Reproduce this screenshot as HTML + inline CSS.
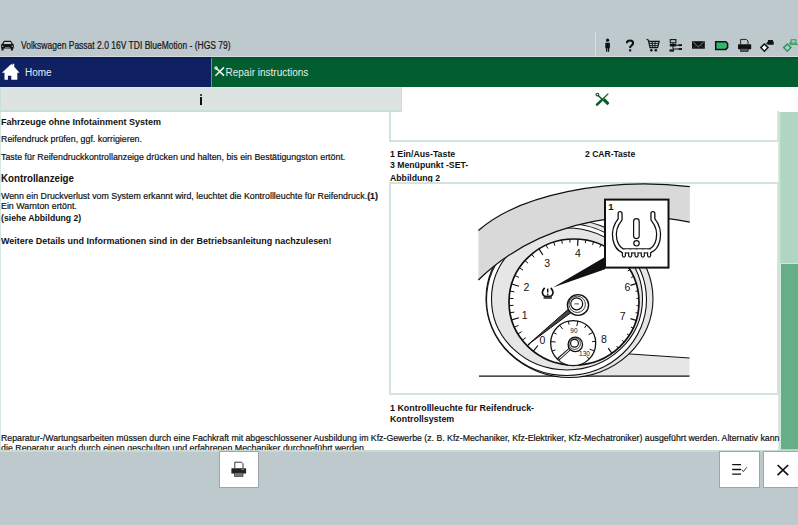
<!DOCTYPE html>
<html><head><meta charset="utf-8">
<style>
*{margin:0;padding:0;box-sizing:border-box}
html,body{width:798px;height:525px;overflow:hidden;background:#bec9cd;font-family:"Liberation Sans",sans-serif;color:#111}
.abs{position:absolute}
#title{left:21px;top:40px;font-size:10px;line-height:12px;color:#151515;white-space:nowrap;transform-origin:0 0;transform:scaleX(0.85);-webkit-text-stroke:0.2px #151515}
#home{left:0;top:57px;width:211px;height:30px;background:#0f2163;border-top:2px solid #0c1b5c}
#rep{left:211px;top:57px;width:587px;height:30px;background:#025d2f;border-left:1px solid #6f8f9a;border-top:2px solid #025529}
#tabs{left:0;top:87px;width:798px;height:26px;background:#fff}
#tab1{left:0;top:87px;width:402px;height:25px;background:#dde2e3;border:1px solid #c6e0d2;border-bottom:2px solid #c6e0d2;border-top:1px solid #d9ece2}
#content{left:0;top:112px;width:798px;height:338px;background:#fff;overflow:hidden;border-left:1px solid #d6e8de}
#sbtrack{left:778px;top:112px;width:20px;height:338px;background:linear-gradient(to right,#e2efe8 0,#c2dfd0 2px,#b1d5c3 3px,#b1d5c3 100%)}
#sbthumb{left:780px;top:263px;width:18px;height:186px;background:#66ae88;border-left:1px solid #d4ebdf;border-top:1px solid #cfe8db}
.t{position:absolute;white-space:nowrap;font-size:9px;line-height:10px;color:#111;transform-origin:0 0}
.b{font-weight:bold}
.r{font-size:9.5px;transform:scaleX(0.93);-webkit-text-stroke:0.2px #111}
#bottom{left:0;top:450px;width:798px;height:75px;background:#bec9cd;border-top:2px solid #c6dcd1}
.btn{position:absolute;background:#fff;border:1px solid #9ca6ab}
.nt{position:absolute;white-space:nowrap;color:#e4e8f2;font-size:10px;line-height:12px;transform-origin:0 0}
</style></head><body>
<div id="title" class="abs">Volkswagen Passat 2.0 16V TDI BlueMotion - (HGS 79)</div>
<!-- car icon -->
<svg class="abs" style="left:0;top:37px" width="16" height="16" viewBox="0 37 16 16">
<path d="M2.4 43.6 L3.4 41.4 Q3.7 40.8 4.4 40.8 L10.4 40.8 Q11.1 40.8 11.4 41.4 L12.5 43.6 L13.4 44 Q13.8 44.3 13.8 45 L13.8 48.4 L12.9 48.4 L12.9 50.4 L10.9 50.4 L10.9 48.6 L3.6 48.6 L3.6 50.4 L1.6 50.4 L1.6 48.4 L1.1 48.4 L1.1 45 Q1.1 44.3 1.5 44 Z" fill="#151515"/>
<path d="M3.6 43.9 L4.4 42.1 L10.6 42.1 L11.4 43.9 Z" fill="#c6cfd3"/>
<circle cx="2.7" cy="46.2" r="0.75" fill="#aab4b8"/><circle cx="12.2" cy="46.2" r="0.75" fill="#aab4b8"/>
<rect x="5.2" y="47.2" width="4.4" height="0.8" fill="#8a9499"/>
</svg>
<!-- header right icons -->
<div class="abs" style="left:595px;top:32px;width:1px;height:25px;background:#d9dfe2"></div>
<svg class="abs" style="left:596px;top:32px" width="202" height="25" viewBox="596 32 202 25">
<!-- person -->
<circle cx="607.6" cy="40.2" r="1.6" fill="#111"/>
<path d="M605.3 42.8 H609.9 V48.2 H609.2 V51.8 H607.9 V48.2 H607.3 V51.8 H606 V48.2 H605.3 Z" fill="#111"/>
<!-- question -->
<path d="M626.9 43.2 Q626.9 40.5 630 40.5 Q633.1 40.5 633.1 43.1 Q633.1 44.6 631.4 45.6 Q630.1 46.3 630.1 48" fill="none" stroke="#111" stroke-width="2.1"/>
<rect x="629" y="49.3" width="2.2" height="2.1" fill="#111"/>
<!-- cart -->
<path d="M646.6 39.3 L648.4 40.2 L650 47.7 H657.6 L659.2 41.4 H648.6" fill="none" stroke="#111" stroke-width="1.2"/>
<path d="M649.3 43.4 H658.6 M649.8 45.6 H658 M652 41.4 L652.6 47.7 M655.2 41.4 L654.9 47.7" stroke="#111" stroke-width="0.9"/>
<circle cx="651.3" cy="50.3" r="1.3" fill="#111"/><circle cx="655.8" cy="50.3" r="1.3" fill="#111"/>
<!-- network -->
<rect x="670.3" y="39.6" width="5.6" height="3.2" fill="none" stroke="#111" stroke-width="1.1"/>
<rect x="669.8" y="44" width="6.6" height="2.4" fill="#111"/>
<path d="M673 42.8 V49.2 M676.4 45.2 H682 M673 49 H682" stroke="#111" stroke-width="1"/>
<rect x="678.6" y="44.3" width="3.4" height="1.8" fill="#111"/><rect x="678.6" y="48.1" width="3.4" height="1.8" fill="#111"/>
<rect x="669.5" y="49.4" width="4.5" height="2.2" fill="#111"/>
<!-- mail -->
<rect x="692" y="41.2" width="12.8" height="7.5" fill="#111"/>
<path d="M693.2 42 L698.4 47 L703.6 42" fill="none" stroke="#9aa3a6" stroke-width="0.8"/><path d="M693.2 48 L696.2 45.4 M703.6 48 L700.6 45.4" fill="none" stroke="#555" stroke-width="0.6"/>
<!-- battery -->
<path d="M715.7 41.7 H725.8 L727.6 43.6 V47.6 L725.8 49.4 H715.7 Z" fill="#2db86a" stroke="#111" stroke-width="1.5" stroke-linejoin="miter"/>
<!-- printer -->
<path d="M740.6 44 V39.4 H746.3 L748 41 V44" fill="none" stroke="#111" stroke-width="0.9"/>
<rect x="738" y="44.2" width="13.2" height="5" rx="0.6" fill="#111"/>
<rect x="740.6" y="48.4" width="7.6" height="3" fill="#555" stroke="#111" stroke-width="0.6"/>
<!-- diamond/car -->
<path d="M764.4 44 L768 47.6 L764.4 51.2 L760.8 47.6 Z" fill="#fff" stroke="#111" stroke-width="1.5"/>
<path d="M766.4 44.2 L768.8 41.8" stroke="#111" stroke-width="1.2"/>
<path d="M767.5 42.4 L768.2 40 H772.8 L773.7 42.4 V44.8 H767.5 Z" fill="#111"/>
<!-- green diamond -->
<path d="M787.3 44 L790.9 47.6 L787.3 51.2 L783.7 47.6 Z" fill="none" stroke="#2a9a5a" stroke-width="1.5"/>
<path d="M789.2 44.1 L791.4 41.9" stroke="#2a9a5a" stroke-width="1.1"/>
<rect x="791" y="39.8" width="5" height="3.2" fill="none" stroke="#2a9a5a" stroke-width="1"/>
<path d="M790 44.3 H798" stroke="#2a9a5a" stroke-width="1.2"/>
</svg>

<div class="abs" style="left:0;top:56px;width:798px;height:1px;background:#d5dcdf"></div>
<div id="home" class="abs"></div>
<div id="rep" class="abs"></div>
<!-- home icon -->
<svg class="abs" style="left:0;top:57px" width="30" height="30" viewBox="0 57 30 30">
<path d="M1.9 72.7 L11.3 64 L12.6 65.2 V63.8 H14.2 V66.7 L19.5 72.7 H17.3 V79.8 H11.3 V75.7 H7.9 V79.8 H4.5 V72.7 Z" fill="#fff"/>
</svg>
<div class="nt" style="left:25px;top:67px;color:#e6e9f3">Home</div>
<!-- tools icon nav -->
<svg class="abs" style="left:212px;top:57px" width="16" height="30" viewBox="212 57 16 30">
<path d="M215.6 67.6 L224 75.6 M224 67.4 L215.4 75.8" stroke="#e8eee9" stroke-width="1.6"/>
<circle cx="216" cy="68" r="1.3" fill="none" stroke="#e8eee9" stroke-width="1"/>
</svg>
<div class="nt" style="left:225.5px;top:67px;color:#e6eee8">Repair instructions</div>

<div id="tabs" class="abs"></div>
<div id="tab1" class="abs"></div>
<div class="abs" style="left:200px;top:93.6px;width:2px;height:2px;background:#111;border-radius:1px"></div>
<div class="abs" style="left:200px;top:97px;width:2px;height:7.6px;background:#111"></div>
<!-- tools icon tab -->
<svg class="abs" style="left:594px;top:90px" width="18" height="18" viewBox="594 90 18 18">
<path d="M597.6 95 L608 104.6" stroke="#0a5a2a" stroke-width="1.5"/>
<path d="M604 99.2 L608.6 103.8" stroke="#0a5a2a" stroke-width="2.6"/>
<circle cx="597.4" cy="94.6" r="1.4" fill="none" stroke="#0a5a2a" stroke-width="1.1"/>
<path d="M608.3 93.6 L600.5 101.2" stroke="#0a5a2a" stroke-width="1.3"/>
<path d="M601.2 100.6 L597 104.6" stroke="#0a5a2a" stroke-width="2.6" stroke-linecap="round"/>
</svg>

<div id="content" class="abs"></div>
<div id="sbtrack" class="abs"></div>
<div id="sbthumb" class="abs"></div>

<!-- left column text -->
<div class="t b" style="left:1px;top:117px">Fahrzeuge ohne Infotainment System</div>
<div class="t r" style="left:1px;top:133.5px">Reifendruck prüfen, ggf. korrigieren.</div>
<div class="t r" style="left:1px;top:152.2px">Taste für Reifendruckkontrollanzeige drücken und halten, bis ein Bestätigungston ertönt.</div>
<div class="t b" style="left:1px;top:172.5px;font-size:10px;line-height:12px;transform:scaleX(0.973)">Kontrollanzeige</div>
<div class="t r" style="left:1px;top:191px">Wenn ein Druckverlust vom System erkannt wird, leuchtet die Kontrollleuchte für Reifendruck.<b>(1)</b></div>
<div class="t r" style="left:1px;top:200.8px">Ein Warnton ertönt.</div>
<div class="t b" style="left:1px;top:213px;transform:scaleX(0.965)">(siehe Abbildung 2)</div>
<div class="t b" style="left:1px;top:236px;transform:scaleX(0.996)">Weitere Details und Informationen sind in der Betriebsanleitung nachzulesen!</div>

<!-- right column -->
<div class="abs" style="left:389px;top:111px;width:390px;height:31px;border:2px solid #d3e4dc;border-top:none"></div>
<div class="t b" style="left:390px;top:149px;transform:scaleX(0.975)">1 Ein/Aus-Taste</div>
<div class="t b" style="left:584.6px;top:149px;transform:scaleX(0.95)">2 CAR-Taste</div>
<div class="t b" style="left:390px;top:159.5px;transform:scaleX(0.965)">3 Menüpunkt -SET-</div>
<div class="t b" style="left:390px;top:173px;transform:scaleX(0.965)">Abbildung 2</div>
<div class="abs" style="left:389px;top:182px;width:390px;height:213px;border:2px solid #d3e4dc"></div>
<div class="t b" style="left:390px;top:403px;transform:scaleX(0.99)">1 Kontrollleuchte für Reifendruck-</div>
<div class="t b" style="left:390px;top:413.5px;transform:scaleX(0.98)">Kontrollsystem</div>

<div class="t r" style="left:1px;top:432.5px;transform:scaleX(0.92)">Reparatur-/Wartungsarbeiten müssen durch eine Fachkraft mit abgeschlossener Ausbildung im Kfz-Gewerbe (z. B. Kfz-Mechaniker, Kfz-Elektriker, Kfz-Mechatroniker) ausgeführt werden. Alternativ kann</div>
<div class="t r" style="left:1px;top:443.2px">die Reparatur auch durch einen geschulten und erfahrenen Mechaniker durchgeführt werden.</div>

<!-- FIGURE -->
<svg id="fig" class="abs" style="left:390px;top:183px" width="388" height="210" viewBox="390 183 388 210">
<path d="M540 376.2 L620 353.3 L689.5 358 L689.5 376.2 Z" fill="#e6e6e6"/>
<path d="M620 353.3 L689.5 358" stroke="#111" stroke-width="1"/>
<path d="M479 376.2 H689.5" stroke="#111" stroke-width="1.3"/>
<ellipse cx="569.5" cy="298.75" rx="83.5" ry="78.75" fill="#e6e6e6" stroke="#111" stroke-width="1.1"/>
<ellipse cx="566.5" cy="299.5" rx="80" ry="76" fill="#fff" stroke="#111" stroke-width="1.1"/>
<ellipse cx="567" cy="299" rx="75.5" ry="71" fill="#e6e6e6" stroke="#111" stroke-width="1.1"/>
<ellipse cx="574" cy="302" rx="65" ry="63" fill="#fff" stroke="#111" stroke-width="1.7"/>
<path d="M533.4 351.2 L537.9 345.5" stroke="#111" stroke-width="1.2"/>
<path d="M527.5 346.0 L530.5 343.1" stroke="#111" stroke-width="1"/>
<path d="M522.3 340.2 L525.7 337.7" stroke="#111" stroke-width="1"/>
<path d="M517.9 333.9 L521.6 331.7" stroke="#111" stroke-width="1"/>
<path d="M514.4 327.1 L518.4 325.4" stroke="#111" stroke-width="1"/>
<path d="M511.7 319.9 L518.9 317.7" stroke="#111" stroke-width="1.2"/>
<path d="M510.0 312.8 L514.3 312.1" stroke="#111" stroke-width="1"/>
<path d="M509.1 305.6 L513.5 305.3" stroke="#111" stroke-width="1"/>
<path d="M509.1 298.3 L513.5 298.6" stroke="#111" stroke-width="1"/>
<path d="M510.0 291.1 L514.3 291.8" stroke="#111" stroke-width="1"/>
<path d="M511.7 284.0 L519.0 286.2" stroke="#111" stroke-width="1.2"/>
<path d="M515.0 275.6 L518.9 277.4" stroke="#111" stroke-width="1"/>
<path d="M519.4 267.8 L523.0 270.1" stroke="#111" stroke-width="1"/>
<path d="M525.0 260.6 L528.1 263.3" stroke="#111" stroke-width="1"/>
<path d="M531.6 254.3 L534.2 257.4" stroke="#111" stroke-width="1"/>
<path d="M539.0 248.9 L542.9 255.0" stroke="#111" stroke-width="1.2"/>
<path d="M546.1 245.1 L547.8 248.5" stroke="#111" stroke-width="1"/>
<path d="M553.7 242.1 L554.9 245.7" stroke="#111" stroke-width="1"/>
<path d="M561.7 240.1 L562.3 243.7" stroke="#111" stroke-width="1"/>
<path d="M569.8 239.1 L570.0 242.6" stroke="#111" stroke-width="1"/>
<path d="M578.0 239.1 L577.6 245.9" stroke="#111" stroke-width="1.2"/>
<path d="M585.8 240.1 L585.3 243.2" stroke="#111" stroke-width="1"/>
<path d="M593.5 241.9 L592.6 244.9" stroke="#111" stroke-width="1"/>
<path d="M601.0 244.7 L599.7 247.4" stroke="#111" stroke-width="1"/>
<path d="M608.0 248.3 L606.5 250.7" stroke="#111" stroke-width="1"/>
<path d="M614.5 252.7 L610.5 257.6" stroke="#111" stroke-width="1.2"/>
<path d="M620.3 257.8 L618.4 259.6" stroke="#111" stroke-width="1"/>
<path d="M625.4 263.5 L623.4 265.1" stroke="#111" stroke-width="1"/>
<path d="M629.8 269.7 L627.7 271.0" stroke="#111" stroke-width="1"/>
<path d="M633.4 276.5 L631.2 277.5" stroke="#111" stroke-width="1"/>
<path d="M636.2 283.6 L630.4 285.3" stroke="#111" stroke-width="1.2"/>
<path d="M638.0 290.8 L635.6 291.3" stroke="#111" stroke-width="1"/>
<path d="M638.9 298.3 L636.5 298.4" stroke="#111" stroke-width="1"/>
<path d="M638.9 305.7 L636.5 305.6" stroke="#111" stroke-width="1"/>
<path d="M638.0 313.2 L635.6 312.7" stroke="#111" stroke-width="1"/>
<path d="M636.2 320.4 L630.4 318.7" stroke="#111" stroke-width="1.2"/>
<path d="M633.2 328.1 L630.9 327.1" stroke="#111" stroke-width="1"/>
<path d="M629.1 335.3 L627.0 334.0" stroke="#111" stroke-width="1"/>
<path d="M624.2 342.0 L622.2 340.4" stroke="#111" stroke-width="1"/>
<path d="M618.4 348.0 L616.5 346.0" stroke="#111" stroke-width="1"/>
<path d="M611.8 353.2 L608.2 348.1" stroke="#111" stroke-width="1.2"/>
<text x="542.5" y="343.8" font-size="10.5" text-anchor="middle" fill="#111" font-family="Liberation Sans">0</text>
<text x="524.7" y="319.3" font-size="10.5" text-anchor="middle" fill="#111" font-family="Liberation Sans">1</text>
<text x="526.5" y="290.5" font-size="10.5" text-anchor="middle" fill="#111" font-family="Liberation Sans">2</text>
<text x="547.2" y="266.6" font-size="10.5" text-anchor="middle" fill="#111" font-family="Liberation Sans">3</text>
<text x="578.0" y="256.8" font-size="10.5" text-anchor="middle" fill="#111" font-family="Liberation Sans">4</text>
<text x="627.3" y="290.8" font-size="10.5" text-anchor="middle" fill="#111" font-family="Liberation Sans">6</text>
<text x="622.7" y="319.5" font-size="10.5" text-anchor="middle" fill="#111" font-family="Liberation Sans">7</text>
<text x="603.9" y="342.6" font-size="10.5" text-anchor="middle" fill="#111" font-family="Liberation Sans">8</text>
<path d="M544.2 288.4 Q540.3 293.2 544.6 296.4 H550.8 Q555.1 293.2 551.2 288.4" fill="none" stroke="#111" stroke-width="1.7" stroke-linecap="round"/>
<rect x="543.5" y="297.3" width="8.4" height="1.4" fill="#111"/>
<path d="M547.7 288.6 V292.6" stroke="#111" stroke-width="1.5"/><circle cx="547.7" cy="294.3" r="0.85" fill="#111"/>
<circle cx="573.2" cy="343.2" r="22.5" fill="#fff" stroke="#111" stroke-width="1.3"/>
<path d="M557.3 359.1 L560.8 355.6" stroke="#111" stroke-width="1"/>
<path d="M552.1 351.1 L555.4 349.9" stroke="#111" stroke-width="1"/>
<path d="M550.8 341.6 L555.7 342.0" stroke="#111" stroke-width="1"/>
<path d="M553.4 332.5 L556.5 334.1" stroke="#111" stroke-width="1"/>
<path d="M559.7 325.2 L562.7 329.2" stroke="#111" stroke-width="1"/>
<path d="M568.3 321.2 L569.1 324.7" stroke="#111" stroke-width="1"/>
<path d="M577.9 321.2 L576.8 326.1" stroke="#111" stroke-width="1"/>
<path d="M586.6 325.1 L584.5 327.9" stroke="#111" stroke-width="1"/>
<path d="M592.9 332.3 L588.5 334.7" stroke="#111" stroke-width="1"/>
<path d="M595.6 341.4 L592.1 341.7" stroke="#111" stroke-width="1"/>
<path d="M594.3 350.9 L589.6 349.2" stroke="#111" stroke-width="1"/>
<path d="M589.2 359.0 L586.8 356.5" stroke="#111" stroke-width="1"/>
<text x="573.9" y="332.6" font-size="6.5" text-anchor="middle" fill="#111" font-family="Liberation Sans">90</text>
<text x="584.5" y="355.6" font-size="6.5" text-anchor="middle" fill="#111" font-family="Liberation Sans">130</text>
<path d="M571 348 L558.4 359.2" stroke="#111" stroke-width="3"/>
<path d="M570.6 348.4 L559.2 358.6" stroke="#fff" stroke-width="1.1"/>
<circle cx="575.3" cy="344.4" r="7.2" fill="#fff" stroke="#111" stroke-width="1.3"/>
<circle cx="574.7" cy="343.7" r="5.7" fill="#fff" stroke="#111" stroke-width="0.8"/>
<circle cx="574.5" cy="343.3" r="3.9" fill="#fff" stroke="#111" stroke-width="1.2"/>
<path d="M527.9 344.8 L569 308.6 L571.8 312 Z" fill="#444" stroke="#111" stroke-width="1"/>
<ellipse cx="578" cy="305" rx="10.6" ry="10.4" fill="#fff" stroke="#111" stroke-width="1.4"/>
<circle cx="577.2" cy="304.3" r="8.2" fill="#fff" stroke="#111" stroke-width="0.8"/>
<circle cx="576.7" cy="303.8" r="6" fill="#fff" stroke="#111" stroke-width="1.2"/>
<rect x="574.4" y="303.2" width="4.6" height="1.3" fill="#777"/>
<path d="M478.4 230.6 A187.1 85.9 0 0 1 689.8 186.6 L689.8 222.1 A216.8 189.5 0 0 0 478.4 280 Z" fill="#d9d9d9"/>
<path d="M478.4 230.6 A187.1 85.9 0 0 1 689.8 186.6" fill="none" stroke="#111" stroke-width="1.3"/>
<path d="M689.8 222.1 A216.8 189.5 0 0 0 478.4 280" fill="none" stroke="#111" stroke-width="1.3"/>
<path d="M552.9 287.4 L605 256.9 L605 269.3 Z" fill="#111"/>
<rect x="605" y="199.6" width="63.5" height="68" fill="#fff" stroke="#111" stroke-width="2"/>
<text x="608.3" y="209.9" font-size="9.5" font-weight="bold" fill="#111" font-family="Liberation Sans">1</text>
<path d="M620.1 213.6 V219.4 Q612.6 228.6 614.9 239.6 Q616.8 248.2 623 250.9 H650 Q656.2 248.2 658.1 239.6 Q660.4 228.6 652.9 219.4 V213.6" fill="none" stroke="#111" stroke-width="5.2" stroke-linecap="round" stroke-linejoin="round"/>
<path d="M620.1 213.6 V219.4 Q612.6 228.6 614.9 239.6 Q616.8 248.2 623 250.9 H650 Q656.2 248.2 658.1 239.6 Q660.4 228.6 652.9 219.4 V213.6" fill="none" stroke="#fff" stroke-width="2.6" stroke-linecap="round" stroke-linejoin="round"/>
<path d="M623.9 251.2 V255.6" stroke="#111" stroke-width="4.2" stroke-linecap="round"/>
<path d="M623.9 251.2 V255.6" stroke="#fff" stroke-width="1.8" stroke-linecap="round"/>
<path d="M630.2 251.2 V255.6" stroke="#111" stroke-width="4.2" stroke-linecap="round"/>
<path d="M630.2 251.2 V255.6" stroke="#fff" stroke-width="1.8" stroke-linecap="round"/>
<path d="M636.5 251.2 V255.6" stroke="#111" stroke-width="4.2" stroke-linecap="round"/>
<path d="M636.5 251.2 V255.6" stroke="#fff" stroke-width="1.8" stroke-linecap="round"/>
<path d="M642.8 251.2 V255.6" stroke="#111" stroke-width="4.2" stroke-linecap="round"/>
<path d="M642.8 251.2 V255.6" stroke="#fff" stroke-width="1.8" stroke-linecap="round"/>
<path d="M649.1 251.2 V255.6" stroke="#111" stroke-width="4.2" stroke-linecap="round"/>
<path d="M649.1 251.2 V255.6" stroke="#fff" stroke-width="1.8" stroke-linecap="round"/>
<path d="M623 250.9 H650" fill="none" stroke="#fff" stroke-width="2.6" stroke-linecap="round" stroke-linejoin="round"/>
<rect x="633.6" y="218.6" width="5.6" height="20" rx="2.8" fill="#fff" stroke="#111" stroke-width="1.2"/>
<circle cx="636.5" cy="243.3" r="2.7" fill="#fff" stroke="#111" stroke-width="1.2"/>
</svg>

<div id="bottom" class="abs"></div>
<div class="btn" style="left:219px;top:451px;width:40px;height:37px"></div>
<svg class="abs" style="left:229px;top:459px" width="20" height="20" viewBox="229 459 20 20">
<path d="M234.8 468.3 V462.2 H241.5 L243 463.7 V468.3" fill="none" stroke="#222" stroke-width="0.9"/>
<rect x="231.4" y="468.2" width="14.7" height="5.4" rx="0.5" fill="#222"/>
<rect x="234.6" y="472.8" width="8.4" height="3.6" fill="#777" stroke="#222" stroke-width="0.6"/>
<rect x="241.5" y="469.2" width="2.6" height="0.9" fill="#999"/>
</svg>
<div class="btn" style="left:719px;top:451px;width:41px;height:37px"></div>
<svg class="abs" style="left:728px;top:460px" width="24" height="20" viewBox="728 460 24 20">
<path d="M732.2 464.6 H741 M732.2 469.5 H741 M732.2 474.1 H741" stroke="#111" stroke-width="1.3"/>
<path d="M741.8 469.6 L743.4 471.6 L746.8 467.2" fill="none" stroke="#111" stroke-width="0.8"/>
</svg>
<div class="btn" style="left:763px;top:451px;width:36px;height:37px"></div>
<svg class="abs" style="left:772px;top:460px" width="22" height="22" viewBox="772 460 22 22">
<path d="M777.6 465 L788.2 475.2 M788.2 465 L777.6 475.2" stroke="#111" stroke-width="1.7"/>
</svg>
</body></html>
